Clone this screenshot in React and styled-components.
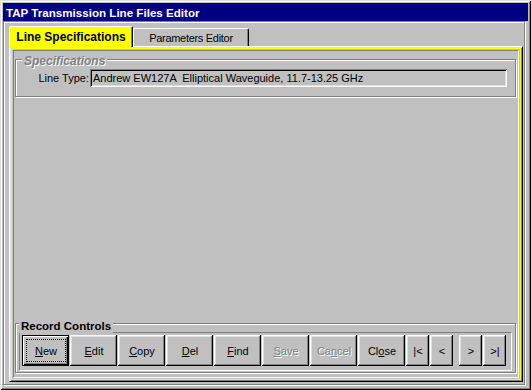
import React from "react";
import styled, { createGlobalStyle, css } from "styled-components";

const GlobalStyle = createGlobalStyle`
  html, body { margin: 0; padding: 0; background: #c0c0c0; }
  body { font-family: "Liberation Sans", Arial, sans-serif; color: #000; }
  * { box-sizing: border-box; }
`;

const Window = styled.div`
  width: 531px;
  height: 390px;
  padding: 3px;
  background: #c0c0c0;
  display: flex;
  flex-direction: column;
  box-shadow: inset 1px 1px #dfdfdf, inset -1px -1px #000, inset 2px 2px #fff,
    inset -2px -2px #808080;
`;

const TitleBar = styled.div`
  height: 18px;
  padding-left: 3px;
  background: #000080;
  color: #fff;
  font-size: 11.6px;
  font-weight: bold;
  display: flex;
  align-items: center;
`;

/* etched frame round the client area */
const Client = styled.div`
  flex: 1;
  margin: 0 3px 2px 0;
  padding: 4px 1px 2px 5px;
  border: 1px solid #808080;
  box-shadow: inset 1px 1px #fff, 1px 1px #fff;
  display: flex;
  flex-direction: column;
`;

const TabStrip = styled.div`
  height: 20px;
  display: flex;
  align-items: flex-start;
`;

const Tab = styled.div`
  position: relative;
  width: ${(p) => p.$w}px;
  display: flex;
  align-items: center;
  justify-content: center;
  border-top: 1px solid #fff;
  border-left: 1px solid #fff;
  border-right: 1px solid #000;
  border-radius: 2px 2px 0 0;
  box-shadow: inset -1px 0 #808080;
  white-space: nowrap;
  ${(p) =>
    p.$active
      ? css`
          z-index: 2;
          height: 21px;
          background: #ffff00;
          font-size: 12px;
          font-weight: bold;
        `
      : css`
          height: 18px;
          margin-top: 2px;
          background: #c0c0c0;
          font-size: 11px;
          letter-spacing: -0.3px;
        `}
`;

const Panel = styled.div`
  flex: 1;
  padding: 3px;
  border: 1px solid;
  border-color: #fff #000 #000 #fff;
  box-shadow: inset 1px 1px #dfdfdf, inset -1px -1px #808080,
    inset 2px 2px #ffff00, inset -2px -2px #ffff00;
  display: flex;
`;

const Sunken = styled.div`
  flex: 1;
  padding: 8px 2px 4px 1px;
  border: 1px solid;
  border-color: #808080 #fff #fff #808080;
  display: flex;
  flex-direction: column;
`;

const Group = styled.div`
  position: relative;
  height: ${(p) => p.$h}px;
  border: 1px solid #808080;
  box-shadow: inset 1px 1px #fff, 1px 1px #fff;
  ${(p) =>
    p.$bottom &&
    css`
      margin-top: auto;
    `}
`;

const Legend = styled.span`
  position: absolute;
  top: ${(p) => p.$top}px;
  left: ${(p) => p.$left}px;
  padding: 0 2px;
  background: #c0c0c0;
  line-height: 14px;
  font-weight: bold;
  white-space: nowrap;
  ${(p) =>
    p.$disabled
      ? css`
          font-size: 12px;
          font-style: italic;
          color: #808080;
          text-shadow: 1px 1px #fff;
        `
      : css`
          font-size: 11.5px;
          color: #000;
        `}
`;

const FieldRow = styled.div`
  display: flex;
  align-items: center;
  gap: 1px;
  padding: 9px 8px 0 0;
`;

const FieldLabel = styled.span`
  width: 73px;
  text-align: right;
  font-size: 11px;
  white-space: nowrap;
`;

const Field = styled.div`
  flex: 1;
  height: 18px;
  padding-left: 3px;
  background: #c0c0c0;
  font-size: 11px;
  white-space: pre;
  display: flex;
  align-items: center;
  box-shadow: inset 1px 1px #808080, inset -1px -1px #fff, inset 2px 2px #000,
    inset -2px -2px #dfdfdf;
`;

const ButtonArea = styled.div`
  padding: 8px 3px 1px 3px;
`;

const ButtonBar = styled.div`
  height: 39px;
  padding: 2px 0 0 2px;
  border: 1px solid;
  border-color: #808080 #fff #fff #808080;
  display: flex;
  align-items: flex-start;
  gap: 1px;
`;

const Btn = styled.button`
  width: ${(p) => p.$w}px;
  height: 31px;
  margin-left: ${(p) => p.$gap || 0}px;
  padding: 0;
  border: none;
  background: #c0c0c0;
  font-family: "Liberation Sans", Arial, sans-serif;
  font-size: 11px;
  color: ${(p) => (p.disabled ? "#808080" : "#000")};
  text-shadow: ${(p) => (p.disabled ? "1px 1px #fff" : "none")};
  display: flex;
  box-shadow: ${(p) =>
    p.$default
      ? "inset 0 0 0 1px #000, inset 2px 2px #fff, inset -2px -2px #000, inset -3px -3px #808080"
      : "inset -1px -1px #000, inset 1px 1px #fff, inset -2px -2px #808080, inset 2px 2px #dfdfdf"};
  u {
    text-decoration-thickness: 1px;
    text-underline-offset: 1px;
  }
`;

const BtnLabel = styled.span`
  flex: 1;
  margin: 4px 3px 4px 4px;
  border: 1px dotted ${(p) => (p.$focus ? "#000" : "transparent")};
  display: flex;
  align-items: center;
  justify-content: center;
  white-space: pre;
`;

const buttons = [
  { pre: "", key: "N", post: "ew", def: true },
  { pre: "", key: "E", post: "dit" },
  { pre: "", key: "C", post: "opy" },
  { pre: "", key: "D", post: "el" },
  { pre: "", key: "F", post: "ind" },
  { pre: "", key: "S", post: "ave", off: true },
  { pre: "Ca", key: "n", post: "cel", off: true },
  { pre: "Cl", key: "o", post: "se" },
];

const nav = [
  { text: "|<" },
  { text: "<" },
  { text: ">", gap: 5 },
  { text: ">|" },
];

export default function App() {
  return (
    <>
      <GlobalStyle />
      <Window>
        <TitleBar>TAP Transmission Line Files Editor</TitleBar>
        <Client>
          <TabStrip>
            <Tab $active $w={124}>
              Line Specifications
            </Tab>
            <Tab $w={116}>Parameters Editor</Tab>
          </TabStrip>
          <Panel>
            <Sunken>
              <Group $h={38}>
                <Legend $disabled $top={-6} $left={6}>
                  Specifications
                </Legend>
                <FieldRow>
                  <FieldLabel>Line Type:</FieldLabel>
                  <Field>Andrew EW127A  Elliptical Waveguide, 11.7-13.25 GHz</Field>
                </FieldRow>
              </Group>
              <Group $bottom $h={50}>
                <Legend $top={-5} $left={3}>
                  Record Controls
                </Legend>
                <ButtonArea>
                  <ButtonBar>
                    {buttons.map((b) => (
                      <Btn
                        key={b.key + b.post}
                        $w={47}
                        $default={b.def}
                        disabled={b.off}
                      >
                        <BtnLabel $focus={b.def}>
                          {b.pre}
                          <u>{b.key}</u>
                          {b.post}
                        </BtnLabel>
                      </Btn>
                    ))}
                    {nav.map((n) => (
                      <Btn key={n.text} $w={23} $gap={n.gap}>
                        <BtnLabel>{n.text}</BtnLabel>
                      </Btn>
                    ))}
                  </ButtonBar>
                </ButtonArea>
              </Group>
            </Sunken>
          </Panel>
        </Client>
      </Window>
    </>
  );
}
